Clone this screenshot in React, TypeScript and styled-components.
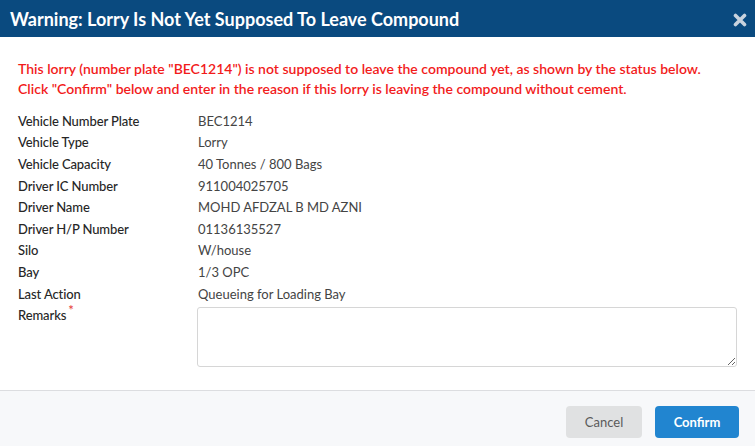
import React from 'react'
import styled, { createGlobalStyle } from 'styled-components'

const GlobalStyle = createGlobalStyle`
  html, body {
    margin: 0;
    padding: 0;
    background: #fff;
    font-family: Lato, "Open Sans", sans-serif;
  }
  * { box-sizing: border-box; }
`

const Modal = styled.div`
  width: 755px;
  height: 446px;
  display: flex;
  flex-direction: column;
  background: #fff;
`

const Header = styled.div`
  height: 37px;
  background: #0a4a7f;
  display: flex;
  align-items: center;
  justify-content: space-between;
  padding: 0 7px 0 10px;
`

const Title = styled.h1`
  margin: 0;
  font-size: 18px;
  font-weight: 700;
  color: #fff;
`

const Close = styled.button`
  border: 0;
  background: none;
  padding: 0;
  width: 16px;
  height: 16px;
  display: flex;
  align-items: center;
  justify-content: center;
  margin-top: 2px;
  cursor: pointer;
`

const Body = styled.div`
  padding: 22px 18px 0 18px;
  flex: 1;
`

const Warning = styled.p`
  margin: 0 0 11px 0;
  color: #f21b1b;
  font-size: 14px;
  line-height: 20px;
  font-weight: 600;
`

const Details = styled.div`
  display: grid;
  grid-template-columns: 180px 1fr;
  grid-auto-rows: 21.6px;
  font-size: 13px;
  align-items: center;
`

const Label = styled.div`
  color: #262626;
  font-weight: 500;
  letter-spacing: -0.1px;
`

const Value = styled.div`
  color: #444;
`

const Required = styled.sup`
  color: #e53935;
  font-size: 13px;
  margin-left: 2px;
  vertical-align: 5px;
  line-height: 0;
`

const RemarksRow = styled.div`
  display: grid;
  grid-template-columns: 179px 1fr;
  align-items: start;
`

const RemarksLabel = styled(Label)`
  line-height: 23px;
  font-size: 13px;
`

const TextArea = styled.textarea`
  width: 540px;
  height: 60px;
  border: 1px solid #d6d6d6;
  border-radius: 3px;
  margin-top: 3px;
  font-family: inherit;
  resize: vertical;
`

const Footer = styled.div`
  height: 56px;
  border-top: 1px solid #dcdde0;
  background: #f7f8fa;
  display: flex;
  align-items: flex-start;
  justify-content: flex-end;
  gap: 13px;
  padding: 15px 16px 0 0;
`

const Button = styled.button<{ $primary?: boolean }>`
  height: 32px;
  border: 0;
  border-radius: 4px;
  font-family: inherit;
  font-size: 13px;
  padding: 0;
  width: ${p => (p.$primary ? '84px' : '76px')};
  background: ${p => (p.$primary ? '#2185d0' : '#e0e1e2')};
  color: ${p => (p.$primary ? '#fff' : '#5a5a5a')};
  font-weight: ${p => (p.$primary ? 700 : 400)};
  cursor: pointer;
`

const rows: [string, string][] = [
  ['Vehicle Number Plate', 'BEC1214'],
  ['Vehicle Type', 'Lorry'],
  ['Vehicle Capacity', '40 Tonnes / 800 Bags'],
  ['Driver IC Number', '911004025705'],
  ['Driver Name', 'MOHD AFDZAL B MD AZNI'],
  ['Driver H/P Number', '01136135527'],
  ['Silo', 'W/house'],
  ['Bay', '1/3 OPC'],
  ['Last Action', 'Queueing for Loading Bay'],
]

export default function App() {
  return (
    <>
      <GlobalStyle />
      <Modal>
        <Header>
          <Title>Warning: Lorry Is Not Yet Supposed To Leave Compound</Title>
          <Close aria-label='close'>
            <svg width='14' height='14' viewBox='0 0 14 14'>
              <path d='M2.5 2.5 L11.5 11.5 M11.5 2.5 L2.5 11.5' stroke='#c9d3de' strokeWidth='3.6' strokeLinecap='round' />
            </svg>
          </Close>
        </Header>
        <Body>
          <Warning>
            This lorry (number plate "BEC1214") is not supposed to leave the compound yet, as shown by the status below.
            <br />
            Click "Confirm" below and enter in the reason if this lorry is leaving the compound without cement.
          </Warning>
          <Details>
            {rows.map(([k, v]) => (
              <React.Fragment key={k}>
                <Label>{k}</Label>
                <Value>{v}</Value>
              </React.Fragment>
            ))}
          </Details>
          <RemarksRow>
            <RemarksLabel>
              Remarks<Required>*</Required>
            </RemarksLabel>
            <TextArea />
          </RemarksRow>
        </Body>
        <Footer>
          <Button>Cancel</Button>
          <Button $primary>Confirm</Button>
        </Footer>
      </Modal>
    </>
  )
}
